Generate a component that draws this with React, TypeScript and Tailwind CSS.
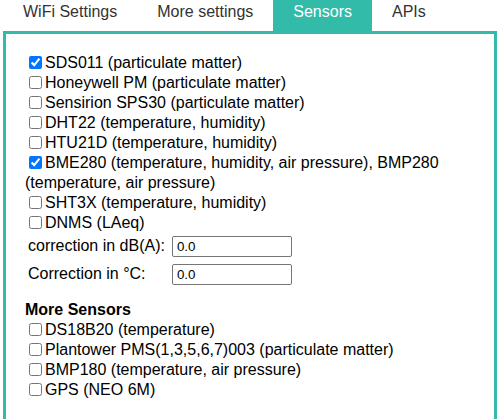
const tabs = ['WiFi Settings', 'More settings', 'Sensors', 'APIs'];

const sensors = [
  { label: 'SDS011 (particulate matter)', checked: true },
  { label: 'Honeywell PM (particulate matter)', checked: false },
  { label: 'Sensirion SPS30 (particulate matter)', checked: false },
  { label: 'DHT22 (temperature, humidity)', checked: false },
  { label: 'HTU21D (temperature, humidity)', checked: false },
  {
    label: 'BME280 (temperature, humidity, air pressure), BMP280 (temperature, air pressure)',
    checked: true,
  },
  { label: 'SHT3X (temperature, humidity)', checked: false },
  { label: 'DNMS (LAeq)', checked: false },
];

const moreSensors = [
  'DS18B20 (temperature)',
  'Plantower PMS(1,3,5,6,7)003 (particulate matter)',
  'BMP180 (temperature, air pressure)',
  'GPS (NEO 6M)',
];

const SensorRow = ({ label, checked }: { label: string; checked: boolean }) => {
  return (
    <div className="leading-5">
      <label>
        <input type="checkbox" defaultChecked={checked} className="m-[3px_3px_3px_4px] align-[-1px]" />
        {label}
      </label>
    </div>
  );
};

const NumberField = ({ label }: { label: string }) => {
  return (
    <tr>
      <td className="py-px pl-px pr-[4px]">{label}</td>
      <td className="p-px">
        <input
          type="text"
          defaultValue="0.0"
          className="h-[21px] w-[120px] rounded-[2px] border border-[#767676] px-[4px] font-['Liberation_Sans',Arial,sans-serif] text-[13.333px] text-black"
        />
      </td>
    </tr>
  );
};

export default function App() {
  return (
    <div className="min-h-[419px] overflow-hidden bg-white font-['Liberation_Sans',Arial,sans-serif] text-[16px] text-black">
      <div className="ml-[3px] flex">
        {tabs.map((tab) => (
          <div
            key={tab}
            className={
              tab === 'Sensors'
                ? 'h-[31px] bg-[#3ba] px-5 pt-[3px] leading-[18px] text-white'
                : 'h-[31px] px-5 pt-[3px] leading-[18px] text-[#333]'
            }
          >
            {tab}
          </div>
        ))}
      </div>
      <div className="ml-[3px] mr-[5px] border-[3px] border-[#3ba] pb-10 pl-[19px] pr-[19px] pt-[19px]">
        {sensors.map((s) => (
          <SensorRow key={s.label} label={s.label} checked={s.checked} />
        ))}
        <table className="-mt-[2px] border-separate border-spacing-[2px]">
          <tbody>
            <NumberField label="correction in dB(A):" />
            <NumberField label="Correction in °C:" />
          </tbody>
        </table>
        <div className="mt-[11px] font-bold leading-5">More Sensors</div>
        {moreSensors.map((s) => (
          <SensorRow key={s} label={s} checked={false} />
        ))}
      </div>
    </div>
  );
}
